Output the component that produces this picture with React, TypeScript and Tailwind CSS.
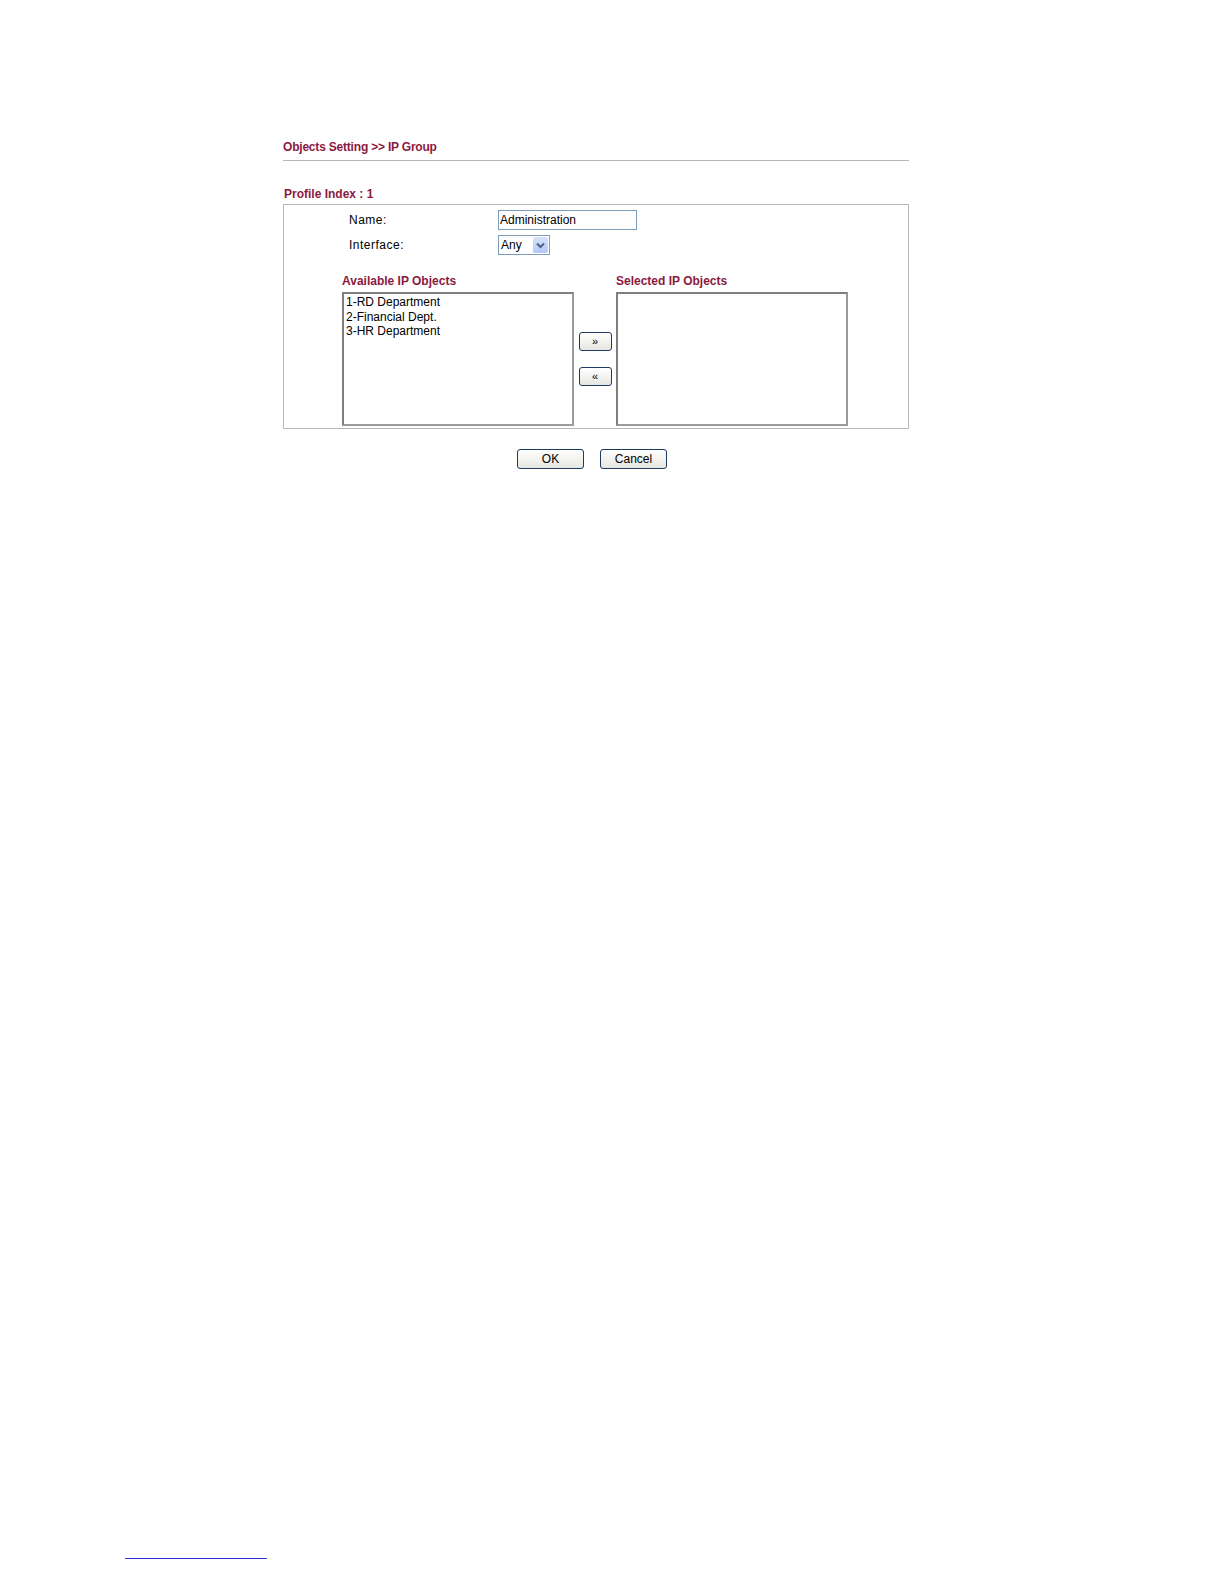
import React from "react";

const maroon = "text-[#8b1a3f]";

function ListBox({ items }: { items: string[] }) {
  return (
    <div className="h-[134px] w-[232px] border-2 border-[#9a9a9a] border-t-[#7f7f7f] border-l-[#7f7f7f] bg-white px-[2px] py-[1px] text-[12px] leading-[14.5px] text-black">
      {items.map((it) => (
        <div key={it}>{it}</div>
      ))}
    </div>
  );
}

function SmallButton({ label, className = "" }: { label: string; className?: string }) {
  return (
    <button
      className={`flex items-center justify-center rounded-[3px] border border-[#1d3b63] bg-gradient-to-b from-white to-[#e6e6e0] text-[11px] leading-none text-black ${className}`}
    >
      {label}
    </button>
  );
}

export default function App() {
  return (
    <div className="relative h-[1584px] w-full overflow-hidden bg-white font-['Liberation_Sans',Arial,sans-serif]">
      <div className="ml-[283px] w-[626px] pt-[140px]">
        {/* header */}
        <h1 className={`pb-[6px] text-[12px] font-bold leading-[14px] ${maroon} tracking-[-0.2px]`}>
          Objects Setting &gt;&gt; IP Group
        </h1>
        <div className="h-px bg-[#b5b5b5]" />

        {/* profile */}
        <div className={`mt-[26px] pl-px text-[12px] font-bold leading-[14px] ${maroon}`}>Profile Index : 1</div>
        <div className="mt-[3px] h-[225px] border border-[#b8b8ae] pl-[58px] pt-[5px]">
          <div className="flex items-center">
            <span className="w-[156px] pl-[7px] text-[12px] tracking-[0.5px] text-black">Name:</span>
            <div className="flex h-[20px] w-[139px] items-center border border-[#7f9db9] px-[1px] text-[12px] text-black">
              Administration
            </div>
          </div>
          <div className="mt-[5px] flex items-center">
            <span className="w-[156px] pl-[7px] text-[12px] tracking-[0.5px] text-black">Interface:</span>
            <div className="flex h-[20px] w-[52px] items-center border border-[#7f9db9] pl-[2px] text-[12px] text-black">
              <span className="flex-1">Any</span>
              <span className="mr-px flex h-[16px] w-[15px] items-center justify-center rounded-[2px] bg-gradient-to-b from-[#d6e3fb] to-[#b2c9f4]">
                <svg width="9" height="7" viewBox="0 0 9 7">
                  <path d="M1 1.5 L4.5 5 L8 1.5" stroke="#4d6185" strokeWidth="2" fill="none" />
                </svg>
              </span>
            </div>
          </div>

          <div className="mt-[19px] flex">
            <div>
              <div className={`mb-[4px] text-[12px] font-bold leading-[14px] ${maroon}`}>Available IP Objects</div>
              <ListBox items={["1-RD Department", "2-Financial Dept.", "3-HR Department"]} />
            </div>
            <div className="flex w-[42px] flex-col items-center pt-[58px]">
              <SmallButton label="»" className="h-[19px] w-[33px]" />
              <SmallButton label="«" className="mt-[16px] h-[19px] w-[33px]" />
            </div>
            <div>
              <div className={`mb-[4px] text-[12px] font-bold leading-[14px] ${maroon}`}>Selected IP Objects</div>
              <ListBox items={[]} />
            </div>
          </div>
        </div>

        {/* actions */}
        <div className="mt-[20px] flex gap-[16px] pl-[234px]">
          <SmallButton label="OK" className="h-[20px] w-[67px] text-[12px]" />
          <SmallButton label="Cancel" className="h-[20px] w-[67px] text-[12px]" />
        </div>
      </div>

      {/* footnote rule */}
      <div className="absolute left-[125px] top-[1558px] h-px w-[142px] bg-[#2b2bd8]" />
    </div>
  );
}
